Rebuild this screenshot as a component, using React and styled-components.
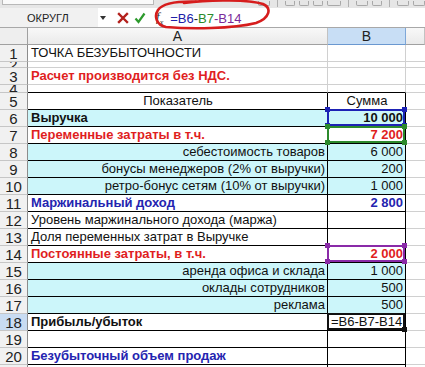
import React from "react";
import styled, { createGlobalStyle } from "styled-components";

const GlobalStyle = createGlobalStyle`
  body {
    margin: 0;
    background: #fff;
    font-family: "Liberation Sans", Arial, sans-serif;
    overflow: hidden;
  }
`;

const tones = {
  ink: "#111",
  red: "#e01e1e",
  blue: "#2424b0",
};

const rows = [
  { n: 1, h: 17, a: { text: "ТОЧКА БЕЗУБЫТОЧНОСТИ" } },
  { n: 2, h: 6 },
  { n: 3, h: 17, a: { text: "Расчет производится без НДС.", tone: "red", bold: true } },
  { n: 4, h: 8, edge: true },
  { n: 5, table: true, a: { text: "Показатель", align: "center" }, b: { text: "Сумма", align: "center" } },
  { n: 6, table: true, fill: true, a: { text: "Выручка", bold: true }, b: { text: "10 000", bold: true, ref: "#1d22b5" } },
  { n: 7, table: true, a: { text: "Переменные затраты в т.ч.", tone: "red", bold: true }, b: { text: "7 200", tone: "red", bold: true, ref: "#2c8a2c" } },
  { n: 8, table: true, fill: true, a: { text: "себестоимость товаров", align: "right" }, b: { text: "6 000" } },
  { n: 9, table: true, fill: true, a: { text: "бонусы менеджеров (2% от выручки)", align: "right" }, b: { text: "200" } },
  { n: 10, table: true, fill: true, a: { text: "ретро-бонус сетям (10% от выручки)", align: "right" }, b: { text: "1 000" } },
  { n: 11, table: true, a: { text: "Маржинальный доход", tone: "blue", bold: true }, b: { text: "2 800", tone: "blue", bold: true } },
  { n: 12, table: true, a: { text: "Уровень маржинального дохода (маржа)" } },
  { n: 13, table: true, a: { text: "Доля переменных затрат в Выручке" } },
  { n: 14, table: true, a: { text: "Постоянные затраты, в т.ч.", tone: "red", bold: true }, b: { text: "2 000", tone: "red", bold: true, ref: "#8a2aa8" } },
  { n: 15, table: true, fill: true, a: { text: "аренда офиса и склада", align: "right" }, b: { text: "1 000" } },
  { n: 16, table: true, fill: true, a: { text: "оклады сотрудников", align: "right" }, b: { text: "500" } },
  { n: 17, table: true, fill: true, a: { text: "реклама", align: "right" }, b: { text: "500" } },
  { n: 18, table: true, active: true, a: { text: "Прибыль/убыток", bold: true }, b: { text: "=B6-B7-B14", align: "left", editing: true } },
  { n: 19, table: true },
  { n: 20, table: true, a: { text: "Безубыточный объем продаж", tone: "blue", bold: true } },
  { n: 21, table: true },
];

const App = () => {
  return (
    <Page>
      <GlobalStyle />
      <Toolbar>
        <FontBox />
        <ToolSpacer />
        <ToolGlyph $w={10} />
        <ToolSep />
        <ToolGlyph $w={8} />
        <ToolGlyph $w={8} />
        <ToolGlyph $w={8} />
        <ToolGlyph $w={12} />
        <ToolSep />
        <ToolGlyph $w={10} />
        <ToolGlyph $w={8} />
        <ToolSep />
        <ToolGlyph $w={10} />
        <ToolGlyph $w={10} />
      </Toolbar>

      <FormulaBar>
        <NameBox>ОКРУГЛ</NameBox>
        <DropArrow />
        <ActionIcon viewBox="0 0 12 12" $gap={11}>
          <path d="M2 2 L10 10 M10 2 L2 10" stroke="#b3201c" strokeWidth="2.4" strokeLinecap="square" />
        </ActionIcon>
        <ActionIcon viewBox="0 0 12 12" $gap={5}>
          <path d="M1.5 6.5 L4.5 10 L10.5 1.5" stroke="#2d9a2d" strokeWidth="2.2" fill="none" />
        </ActionIcon>
        <FxLabel>
          f<sub>x</sub>
        </FxLabel>
        <Formula>
          <Ref $c="#2020a8">=B6</Ref>
          <Ref $c="#222">-</Ref>
          <Ref $c="#2a8a2a">B7</Ref>
          <Ref $c="#7a2a9a">-B14</Ref>
        </Formula>
      </FormulaBar>

      <Scribble viewBox="0 0 125 32" width="125" height="32">
        <path
          d="M34 3 C62 -1 100 0 113 4 C122 8 120 18 106 23 C82 29 40 29 16 27 C6 25 4 16 8 10 C12 4 24 1 46 1.5"
          stroke="#d61d1d"
          strokeWidth="2.6"
          fill="none"
          strokeLinecap="round"
        />
      </Scribble>

      <Sheet>
        <Row $h={17}>
          <Corner />
          <ColHead>A</ColHead>
          <ColHead $active>B</ColHead>
          <ColHead />
        </Row>
        {rows.map((r) => {
          const a = r.a || {};
          const b = r.b || {};
          return (
            <Row key={r.n} $h={r.h || 17}>
              <RowHead $active={r.active}>{r.n}</RowHead>
              <Cell
                $ruled={r.table}
                $edge={r.edge}
                $fill={r.fill}
                $tone={a.tone}
                $bold={a.bold}
                $align={a.align || "left"}
              >
                {a.text}
              </Cell>
              <Cell
                $ruled={r.table}
                $edge={r.edge}
                $fill={r.fill}
                $tone={b.tone}
                $bold={b.bold}
                $align={b.align || "right"}
              >
                {b.text}
                {b.ref && (
                  <RefFrame $c={b.ref}>
                    <Handle $c={b.ref} $top $left />
                    <Handle $c={b.ref} $top />
                    <Handle $c={b.ref} $left />
                    <Handle $c={b.ref} />
                  </RefFrame>
                )}
                {b.editing && (
                  <RefFrame $c="#111">
                    <Handle $c="#111" />
                  </RefFrame>
                )}
              </Cell>
              <Cell />
            </Row>
          );
        })}
      </Sheet>
    </Page>
  );
};

const Page = styled.div`
  position: relative;
  width: 425px;
  height: 367px;
  overflow: hidden;
  background: #fff;
`;

const Toolbar = styled.div`
  display: flex;
  align-items: flex-start;
  gap: 4px;
  height: 8px;
  background: #e6e6e6;
  overflow: hidden;
`;

const FontBox = styled.div`
  width: 150px;
  height: 4px;
  margin-left: 2px;
  background: #fafafa;
  border: 1px solid #b8b8b8;
  border-top: none;
`;

const ToolSpacer = styled.div`
  flex: 1;
`;

const ToolGlyph = styled.div`
  width: ${(p) => p.$w}px;
  height: 4px;
  margin-top: 1px;
  border: 1px solid #a8a8a8;
  border-top: none;
  border-radius: 0 0 2px 2px;
`;

const ToolSep = styled.div`
  width: 1px;
  height: 7px;
  background: #b0b0b0;
  margin: 0 3px;
`;

const FormulaBar = styled.div`
  display: flex;
  align-items: center;
  height: 19px;
  background: #fff;
  border-bottom: 1px solid #a8a8a8;
`;

const NameBox = styled.div`
  box-sizing: border-box;
  width: 98px;
  height: 100%;
  padding-left: 27px;
  display: flex;
  align-items: center;
  background: #f1f1f1;
  font-size: 11px;
  color: #222;
`;

const DropArrow = styled.span`
  width: 0;
  height: 0;
  margin-left: 2px;
  border-left: 3.5px solid transparent;
  border-right: 3.5px solid transparent;
  border-top: 4px solid #333;
`;

const ActionIcon = styled.svg`
  width: 12px;
  height: 12px;
  margin-left: ${(p) => p.$gap}px;
  flex-shrink: 0;
`;

const FxLabel = styled.span`
  margin-left: 10px;
  font-family: "Liberation Serif", serif;
  font-style: italic;
  font-size: 13px;
  color: #333;

  sub {
    font-size: 8px;
  }
`;

const Formula = styled.div`
  margin-left: 7px;
  font-size: 13px;
  padding-top: 1px;
`;

const Ref = styled.span`
  color: ${(p) => p.$c};
`;

const Scribble = styled.svg`
  position: absolute;
  left: 150px;
  top: 0;
  pointer-events: none;
`;

const Sheet = styled.div`
  display: flex;
  flex-direction: column;
`;

const Row = styled.div`
  display: grid;
  grid-template-columns: 28px 300px 78px 1fr;
  height: ${(p) => p.$h}px;
`;

const Corner = styled.div`
  box-sizing: border-box;
  background: #eeeeee;
  border-right: 1px solid #a0a0a0;
  border-bottom: 1px solid #a0a0a0;
`;

const ColHead = styled.div`
  box-sizing: border-box;
  display: flex;
  align-items: center;
  justify-content: center;
  background: ${(p) => (p.$active ? "#c8def5" : "linear-gradient(#f8f8f8, #eaeaea)")};
  border-right: 1px solid ${(p) => (p.$active ? "#7ea7d8" : "#c2c2c2")};
  border-bottom: 1px solid ${(p) => (p.$active ? "#6a98d0" : "#a0a0a0")};
  font-size: 14px;
  color: #222;
`;

const RowHead = styled.div`
  box-sizing: border-box;
  display: flex;
  align-items: center;
  justify-content: center;
  overflow: hidden;
  background: ${(p) => (p.$active ? "#c9dcf2" : "#f1f1f1")};
  border-right: 1px solid #8c8c8c;
  border-bottom: 1px solid #c6c6c6;
  font-size: 15px;
  color: #222;
`;

const Cell = styled.div`
  box-sizing: border-box;
  position: relative;
  display: flex;
  align-items: flex-end;
  justify-content: ${(p) =>
    p.$align === "right" ? "flex-end" : p.$align === "center" ? "center" : "flex-start"};
  padding: 0 2px 1px 3px;
  background: ${(p) => (p.$fill ? "#ccf6fa" : "#fff")};
  border-right: 1px solid ${(p) => (p.$ruled ? "#000" : "#d0d0d0")};
  border-bottom: 1px solid ${(p) => (p.$ruled || p.$edge ? "#000" : "#d0d0d0")};
  color: ${(p) => tones[p.$tone || "ink"]};
  font-weight: ${(p) => (p.$bold ? 700 : 400)};
  font-size: 13px;
  line-height: 15px;
  white-space: nowrap;

  &:last-child {
    border-right: none;
    border-bottom-color: #d0d0d0;
    background: #fff;
  }
`;

const RefFrame = styled.span`
  position: absolute;
  top: -1px;
  left: -1px;
  right: 0;
  bottom: 0;
  border: 2px solid ${(p) => p.$c};
  z-index: 2;
`;

const Handle = styled.span`
  position: absolute;
  width: 5px;
  height: 5px;
  background: ${(p) => p.$c};
  ${(p) => (p.$top ? "top: -4px;" : "bottom: -4px;")}
  ${(p) => (p.$left ? "left: -4px;" : "right: -4px;")}
`;

export default App;
